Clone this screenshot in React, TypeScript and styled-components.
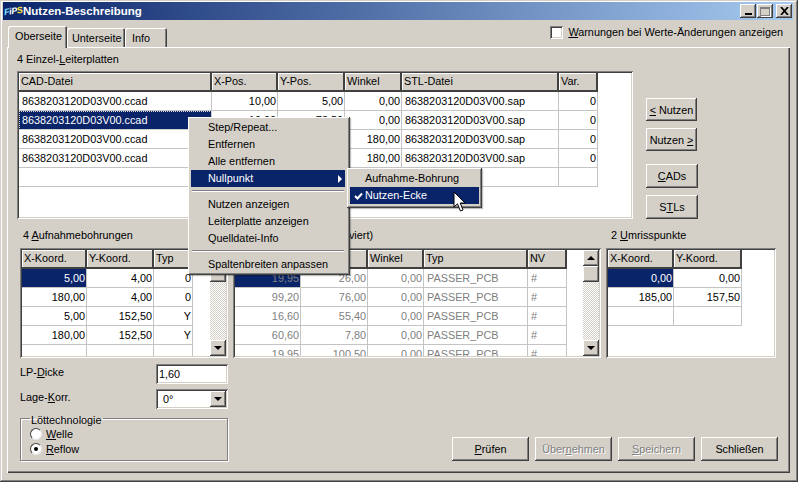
import React from "react";
import styled, { createGlobalStyle, css } from "styled-components";

const FACE = "#d4d0c8";
const NAVY = "#0a246a";

const raised = css`
  background-color: ${FACE};
  box-shadow: inset -1px -1px #404040, inset 1px 1px #fff, inset -2px -2px #808080;
`;
const sunken = css`
  box-shadow: inset 1px 1px #808080, inset -1px -1px #fff, inset 2px 2px #404040, inset -2px -2px ${FACE};
`;

type Column = { title: string; width: number; right?: boolean };

const cadColumns: Column[] = [
  { title: "CAD-Datei", width: 193 },
  { title: "X-Pos.", width: 66, right: true },
  { title: "Y-Pos.", width: 67, right: true },
  { title: "Winkel", width: 57, right: true },
  { title: "STL-Datei", width: 157 },
  { title: "Var.", width: 39, right: true },
];
const cadRows = [
  ["8638203120D03V00.ccad", "10,00", "5,00", "0,00", "8638203120D03V00.sap", "0"],
  ["8638203120D03V00.ccad", "10,00", "78,50", "0,00", "8638203120D03V00.sap", "0"],
  ["8638203120D03V00.ccad", "195,00", "5,00", "180,00", "8638203120D03V00.sap", "0"],
  ["8638203120D03V00.ccad", "195,00", "78,50", "180,00", "8638203120D03V00.sap", "0"],
  ["", "", "", "", "", ""],
];

const holeColumns: Column[] = [
  { title: "X-Koord.", width: 65, right: true },
  { title: "Y-Koord.", width: 67, right: true },
  { title: "Typ", width: 39, right: true },
];
const holeRows = [
  ["5,00", "4,00", "0"],
  ["180,00", "4,00", "0"],
  ["5,00", "152,50", "Y"],
  ["180,00", "152,50", "Y"],
  ["", "", ""],
];

const markColumns: Column[] = [
  { title: "X-Koord.", width: 66, right: true },
  { title: "Y-Koord.", width: 67, right: true },
  { title: "Winkel", width: 56, right: true },
  { title: "Typ", width: 104 },
  { title: "NV", width: 39 },
];
const markRows = [
  ["19,95", "26,00", "0,00", "PASSER_PCB", "#"],
  ["99,20", "76,00", "0,00", "PASSER_PCB", "#"],
  ["16,60", "55,40", "0,00", "PASSER_PCB", "#"],
  ["60,60", "7,80", "0,00", "PASSER_PCB", "#"],
  ["19,95", "100,50", "0,00", "PASSER_PCB", "#"],
];

const outlineColumns: Column[] = [
  { title: "X-Koord.", width: 66, right: true },
  { title: "Y-Koord.", width: 68, right: true },
];
const outlineRows = [
  ["0,00", "0,00"],
  ["185,00", "157,50"],
  ["", ""],
];

const DataGrid = ({
  columns,
  rows,
  selected,
  focus,
  muted,
}: {
  columns: Column[];
  rows: string[][];
  selected: [number, number];
  focus?: boolean;
  muted?: boolean;
}) => (
  <Table $cols={columns.map((c) => c.width + "px").join(" ")}>
    {columns.map((c) => (
      <HeadCell key={c.title}>{c.title}</HeadCell>
    ))}
    {rows.map((row, r) =>
      row.map((text, c) => (
        <Cell
          key={r + "-" + c}
          $right={columns[c].right}
          $muted={muted}
          $selected={selected[0] === r && selected[1] === c}
          $focus={focus}
        >
          {text}
        </Cell>
      ))
    )}
  </Table>
);

const ScrollBar = () => (
  <ScrollTrack>
    <ArrowButton>
      <Arrow $up />
    </ArrowButton>
    <ScrollThumb />
    <ScrollRail />
    <ArrowButton>
      <Arrow />
    </ArrowButton>
  </ScrollTrack>
);

export default function App() {
  return (
    <>
      <GlobalStyle />
      <Window>
        <TitleBar>
          <Logo>
            <LogoLetter $c="#7fe0ff">F</LogoLetter>
            <LogoLetter $c="#ffffff">i</LogoLetter>
            <LogoLetter $c="#ffffff">P</LogoLetter>
            <LogoLetter $c="#ffe640">S</LogoLetter>
          </Logo>
          <TitleText>Nutzen-Beschreibung</TitleText>
          <WindowButtons>
            <WindowButton>
              <MinGlyph />
            </WindowButton>
            <WindowButton>
              <MaxGlyph />
            </WindowButton>
            <CloseButton>
              <svg width="9" height="8" viewBox="0 0 9 8">
                <path d="M1 0 L8 8 M8 0 L1 8" stroke="#000" strokeWidth="1.8" />
              </svg>
            </CloseButton>
          </WindowButtons>
        </TitleBar>

        <TabBar>
          <Tabs>
            <Tab $active $w={59} $pad={7}>Oberseite</Tab>
            <Tab $w={58} $pad={5}>Unterseite</Tab>
            <Tab $w={42} $pad={7}>Info</Tab>
          </Tabs>
          <WarnOption>
            <CheckBox />
            <span>
              <u>W</u>arnungen bei Werte-Änderungen anzeigen
            </span>
          </WarnOption>
        </TabBar>

        <Panel>
          <Caption>
            4 Einzel-<u>L</u>eiterplatten
          </Caption>
          <TopRow>
            <GridFrame $w={616} $h={148}>
              <GridArea>
                <DataGrid columns={cadColumns} rows={cadRows} selected={[1, 0]} focus />
              </GridArea>
            </GridFrame>
            <SideButtons>
              <SmallButton>
                <span>
                  <u>&lt;</u> Nutzen
                </span>
              </SmallButton>
              <SmallButton>
                <span>
                  Nutzen <u>&gt;</u>
                </span>
              </SmallButton>
              <TallButton $spaced>
                <span>
                  <u>C</u>ADs
                </span>
              </TallButton>
              <TallButton>
                <span>
                  S<u>T</u>Ls
                </span>
              </TallButton>
            </SideButtons>
          </TopRow>

          <CaptionRow>
            <Caption>
              4 <u>A</u>ufnahmebohrungen
            </Caption>
            <MarkCaption>4 Passermarken (aktiviert)</MarkCaption>
            <Caption>
              2 <u>U</u>mrisspunkte
            </Caption>
          </CaptionRow>

          <MiddleRow>
            <GridFrame $w={208} $h={110}>
              <GridArea>
                <DataGrid columns={holeColumns} rows={holeRows} selected={[0, 0]} />
              </GridArea>
              <ScrollBar />
            </GridFrame>
            <GridFrame $w={368} $h={110}>
              <GridArea>
                <DataGrid columns={markColumns} rows={markRows} selected={[0, 0]} muted />
              </GridArea>
              <ScrollBar />
            </GridFrame>
            <GridFrame $w={170} $h={110}>
              <GridArea>
                <DataGrid columns={outlineColumns} rows={outlineRows} selected={[0, 0]} />
              </GridArea>
            </GridFrame>
          </MiddleRow>

          <BottomRow>
            <FormColumn>
              <FormRow>
                <FormLabel>
                  LP-<u>D</u>icke
                </FormLabel>
                <TextField>1,60</TextField>
              </FormRow>
              <FormRow>
                <FormLabel>
                  Lage-<u>K</u>orr.
                </FormLabel>
                <ComboField>
                  <ComboText>0°</ComboText>
                  <ArrowButton>
                    <Arrow />
                  </ArrowButton>
                </ComboField>
              </FormRow>
              <GroupBox>
                <GroupLegend>Löttechnologie</GroupLegend>
                <RadioRow>
                  <Radio />
                  <span>
                    <u>W</u>elle
                  </span>
                </RadioRow>
                <RadioRow>
                  <Radio $checked />
                  <span>
                    <u>R</u>eflow
                  </span>
                </RadioRow>
              </GroupBox>
            </FormColumn>
            <ActionButtons>
              <ActionButton>
                <span>
                  <u>P</u>rüfen
                </span>
              </ActionButton>
              <ActionButton $disabled>
                <span>
                  Über<u>n</u>ehmen
                </span>
              </ActionButton>
              <ActionButton $disabled>
                <span>
                  <u>S</u>peichern
                </span>
              </ActionButton>
              <ActionButton>Schließen</ActionButton>
            </ActionButtons>
          </BottomRow>
        </Panel>

        <ContextMenu>
          <MenuItem>Step/Repeat...</MenuItem>
          <MenuItem>Entfernen</MenuItem>
          <MenuItem>Alle entfernen</MenuItem>
          <MenuItem $active>
            Nullpunkt
            <SubArrow />
          </MenuItem>
          <MenuSeparator />
          <MenuItem>Nutzen anzeigen</MenuItem>
          <MenuItem>Leiterplatte anzeigen</MenuItem>
          <MenuItem>Quelldatei-Info</MenuItem>
          <MenuSeparator />
          <MenuItem>Spaltenbreiten anpassen</MenuItem>
        </ContextMenu>

        <SubMenu>
          <MenuItem>Aufnahme-Bohrung</MenuItem>
          <MenuItem $active>
            <CheckMark width="9" height="8" viewBox="0 0 9 8">
              <path d="M1 4 L3.5 6.5 L8 1.5" fill="none" stroke="#fff" strokeWidth="2" />
            </CheckMark>
            Nutzen-Ecke
          </MenuItem>
        </SubMenu>

        <Pointer width="14" height="22" viewBox="0 0 14 22">
          <path
            d="M1 1 L1 16 L4.5 12.8 L7.4 20 L10 19 L7.2 12 L12 12 Z"
            fill="#fff"
            stroke="#000"
            strokeWidth="1"
          />
        </Pointer>
      </Window>
    </>
  );
}

const GlobalStyle = createGlobalStyle`
  html, body {
    margin: 0;
    padding: 0;
    background: ${FACE};
  }
  * {
    box-sizing: border-box;
  }
  u {
    text-underline-offset: 1px;
  }
`;

const Window = styled.div`
  position: relative;
  width: 798px;
  height: 482px;
  padding: 2px 3px;
  overflow: hidden;
  background: ${FACE};
  color: #000;
  font: 10.85px/14px "Liberation Sans", Arial, sans-serif;
  box-shadow: inset -1px -1px #404040, inset 1px 1px ${FACE}, inset -2px -2px #808080, inset 2px 2px #fff;
`;

const TitleBar = styled.div`
  display: flex;
  align-items: center;
  width: 790px;
  height: 18px;
  padding-left: 1px;
  background: linear-gradient(90deg, ${NAVY} 0%, #a6caf0 100%);
`;
const Logo = styled.div`
  display: flex;
  flex: none;
  align-items: center;
  width: 19px;
  height: 16px;
  letter-spacing: -0.4px;
  font: italic bold 9px/12px "Liberation Sans", Arial, sans-serif;
  transform: rotate(-8deg);
`;
const LogoLetter = styled.span<{ $c: string }>`
  color: ${(p) => p.$c};
`;
const TitleText = styled.div`
  color: #fff;
  font: bold 11.5px/16px "Liberation Sans", Arial, sans-serif;
`;
const WindowButtons = styled.div`
  display: flex;
  margin-left: auto;
  padding-right: 1px;
`;
const WindowButton = styled.div`
  ${raised}
  display: flex;
  align-items: center;
  justify-content: center;
  width: 16px;
  height: 14px;
  margin-left: 1px;
`;
const CloseButton = styled(WindowButton)`
  margin-left: 3px;
`;
const MinGlyph = styled.div`
  width: 7px;
  height: 2px;
  margin-top: 6px;
  background: #000;
`;
const MaxGlyph = styled.div`
  width: 10px;
  height: 9px;
  border: 1px solid #808080;
  border-top-width: 2px;
  box-shadow: 1px 1px #fff;
`;

const TabBar = styled.div`
  display: flex;
  justify-content: space-between;
  height: 21px;
  margin-top: 6px;
  padding: 0 12px 0 5px;
`;
const Tabs = styled.div`
  display: flex;
  align-items: flex-end;
`;
const Tab = styled.div<{ $active?: boolean; $w: number; $pad: number }>`
  position: relative;
  z-index: 1;
  width: ${(p) => p.$w}px;
  height: ${(p) => (p.$active ? 22 : 19)}px;
  margin-bottom: ${(p) => (p.$active ? -1 : 0)}px;
  padding: 3px 0 0 ${(p) => p.$pad}px;
  background: ${FACE};
  border-radius: 2px 2px 0 0;
  white-space: nowrap;
  box-shadow: inset 1px 1px #fff, inset -1px 0 #404040, inset -2px 0 #808080;
`;
const WarnOption = styled.div`
  display: flex;
  gap: 5px;
  height: 13px;
  line-height: 13px;
`;
const CheckBox = styled.div`
  ${sunken}
  width: 13px;
  height: 13px;
  background: #fff;
`;

const Panel = styled.div`
  display: flex;
  flex-direction: column;
  width: 783px;
  height: 426px;
  margin-left: 4px;
  padding: 5px 12px 0 10px;
  box-shadow: inset 1px 1px #fff, inset -1px -1px #404040, inset -2px -2px #808080;
`;
const Caption = styled.div`
  height: 14px;
  white-space: nowrap;
`;
const TopRow = styled.div`
  display: flex;
  gap: 13px;
  margin-top: 5px;
`;
const SideButtons = styled.div`
  display: flex;
  flex-direction: column;
  gap: 7px;
  padding-top: 27px;
`;
const PushButton = styled.div`
  ${raised}
  display: flex;
  align-items: center;
  justify-content: center;
  white-space: nowrap;
`;
const SmallButton = styled(PushButton)`
  width: 51px;
  height: 23px;
`;
const TallButton = styled(PushButton)<{ $spaced?: boolean }>`
  width: 52px;
  height: 24px;
  margin-top: ${(p) => (p.$spaced ? 6 : 0)}px;
`;
const CaptionRow = styled.div`
  display: grid;
  grid-template-columns: 211px 377px 1fr;
  margin: 9px 0 0 6px;
`;
const MarkCaption = styled(Caption)`
  text-align: right;
  width: 139px;
`;
const MiddleRow = styled.div`
  display: flex;
  gap: 5px;
  margin: 6px 0 0 3px;
`;
const GridFrame = styled.div<{ $w: number; $h: number }>`
  ${sunken}
  display: flex;
  flex: none;
  width: ${(p) => p.$w}px;
  height: ${(p) => p.$h}px;
  padding: 2px;
  background: #fff;
  overflow: hidden;
`;
const GridArea = styled.div`
  flex: 1;
  min-width: 0;
  overflow: hidden;
`;
const Table = styled.div<{ $cols: string }>`
  display: grid;
  grid-template-columns: ${(p) => p.$cols};
  grid-auto-rows: 19px;
  width: max-content;
`;
const HeadCell = styled.div`
  padding: 1px 0 0 2px;
  background: ${FACE};
  border-right: 2px solid #404040;
  border-bottom: 2px solid #404040;
  box-shadow: inset 1px 1px #fff;
  line-height: 15px;
  white-space: nowrap;
  overflow: hidden;
`;
const Cell = styled.div<{ $right?: boolean; $muted?: boolean; $selected?: boolean; $focus?: boolean }>`
  padding: 2px 1px 0 3px;
  border-right: 1px solid #c4c4c4;
  border-bottom: 1px solid #c4c4c4;
  color: ${(p) => (p.$muted ? "#808080" : p.$selected ? "#fff" : "#000")};
  background: ${(p) => (p.$selected ? NAVY : "#fff")};
  outline: ${(p) => (p.$selected && p.$focus ? "1px dotted #d8d8d8" : "none")};
  outline-offset: -1px;
  text-align: ${(p) => (p.$right ? "right" : "left")};
  white-space: nowrap;
`;
const ScrollTrack = styled.div`
  display: flex;
  flex: none;
  flex-direction: column;
  width: 16px;
`;
const ScrollThumb = styled.div`
  ${raised}
  height: 16px;
`;
const ScrollRail = styled.div`
  flex: 1;
  background: conic-gradient(#fff 25%, ${FACE} 0 50%, #fff 0 75%, ${FACE} 0) 0 0 / 2px 2px;
`;
const ArrowButton = styled.div`
  ${raised}
  display: flex;
  flex: none;
  align-items: center;
  justify-content: center;
  width: 16px;
  height: 16px;
`;
const Arrow = styled.div<{ $up?: boolean }>`
  width: 0;
  height: 0;
  border-left: 4px solid transparent;
  border-right: 4px solid transparent;
  ${(p) =>
    p.$up
      ? css`
          border-bottom: 4px solid #000;
        `
      : css`
          border-top: 4px solid #000;
        `}
`;

const BottomRow = styled.div`
  display: flex;
  justify-content: space-between;
  align-items: flex-end;
  margin: 6px 0 0 3px;
`;
const FormColumn = styled.div`
  display: flex;
  flex-direction: column;
  width: 208px;
`;
const FormRow = styled.div`
  display: flex;
  justify-content: space-between;
  height: 25px;
`;
const FormLabel = styled.div`
  padding-top: 1px;
`;
const TextField = styled.div`
  ${sunken}
  width: 72px;
  height: 20px;
  padding: 3px 0 0 3px;
  background: #fff;
`;
const ComboField = styled.div`
  ${sunken}
  display: flex;
  align-items: center;
  justify-content: space-between;
  width: 72px;
  height: 20px;
  padding: 2px;
  background: #fff;
`;
const ComboText = styled.span`
  padding-left: 5px;
`;
const GroupBox = styled.fieldset`
  height: 51px;
  margin: -4px 0 0;
  padding: 0 0 0 9px;
  border: 1px solid #808080;
  box-shadow: 1px 1px #fff, inset 1px 1px #fff;
`;
const GroupLegend = styled.legend`
  margin-left: 0;
  padding: 4px 1px 0;
  line-height: 12px;
`;
const RadioRow = styled.div`
  display: flex;
  align-items: center;
  gap: 4px;
  height: 15px;
`;
const Radio = styled.div<{ $checked?: boolean }>`
  display: flex;
  align-items: center;
  justify-content: center;
  width: 12px;
  height: 12px;
  border-radius: 50%;
  background: #fff;
  border: 1px solid;
  border-color: #404040 #e8e8e8 #e8e8e8 #404040;
  &::after {
    content: "";
    width: 4px;
    height: 4px;
    border-radius: 50%;
    background: ${(p) => (p.$checked ? "#000" : "transparent")};
  }
`;
const ActionButtons = styled.div`
  display: flex;
  gap: 6px;
`;
const ActionButton = styled(PushButton)<{ $disabled?: boolean }>`
  width: 77px;
  height: 24px;
  color: ${(p) => (p.$disabled ? "#808080" : "#000")};
  text-shadow: ${(p) => (p.$disabled ? "1px 1px #fff" : "none")};
`;

const MenuItem = styled.div<{ $active?: boolean }>`
  position: relative;
  display: flex;
  align-items: center;
  height: 17px;
  padding: 0 0 2px 17px;
  white-space: nowrap;
  color: ${(p) => (p.$active ? "#fff" : "#000")};
  background: ${(p) => (p.$active ? NAVY : "transparent")};
`;
const ContextMenu = styled.div`
  ${raised}
  position: absolute;
  left: 188px;
  top: 117px;
  z-index: 5;
  width: 162px;
  height: 158px;
  padding: 2px 5px 0 3px;
  box-shadow: inset -1px -1px #404040, inset 1px 1px #fff, inset -2px -2px #808080, 1px 1px 1px rgba(0, 0, 0, 0.25);
`;
const SubMenu = styled(ContextMenu)`
  left: 347px;
  top: 168px;
  z-index: 6;
  width: 135px;
  height: 40px;
  padding-right: 3px;
  ${MenuItem} {
    padding-left: 15px;
  }
`;
const MenuSeparator = styled.div`
  height: 2px;
  margin: 3px 1px 4px;
  background: #808080;
  border-bottom: 1px solid #fff;
`;
const SubArrow = styled.span`
  margin: 2px 3px 0 auto;
  border-top: 4px solid transparent;
  border-bottom: 4px solid transparent;
  border-left: 4px solid #fff;
`;
const CheckMark = styled.svg`
  position: absolute;
  left: 4px;
  top: 5px;
`;
const Pointer = styled.svg`
  position: absolute;
  left: 453px;
  top: 191px;
  z-index: 7;
`;
